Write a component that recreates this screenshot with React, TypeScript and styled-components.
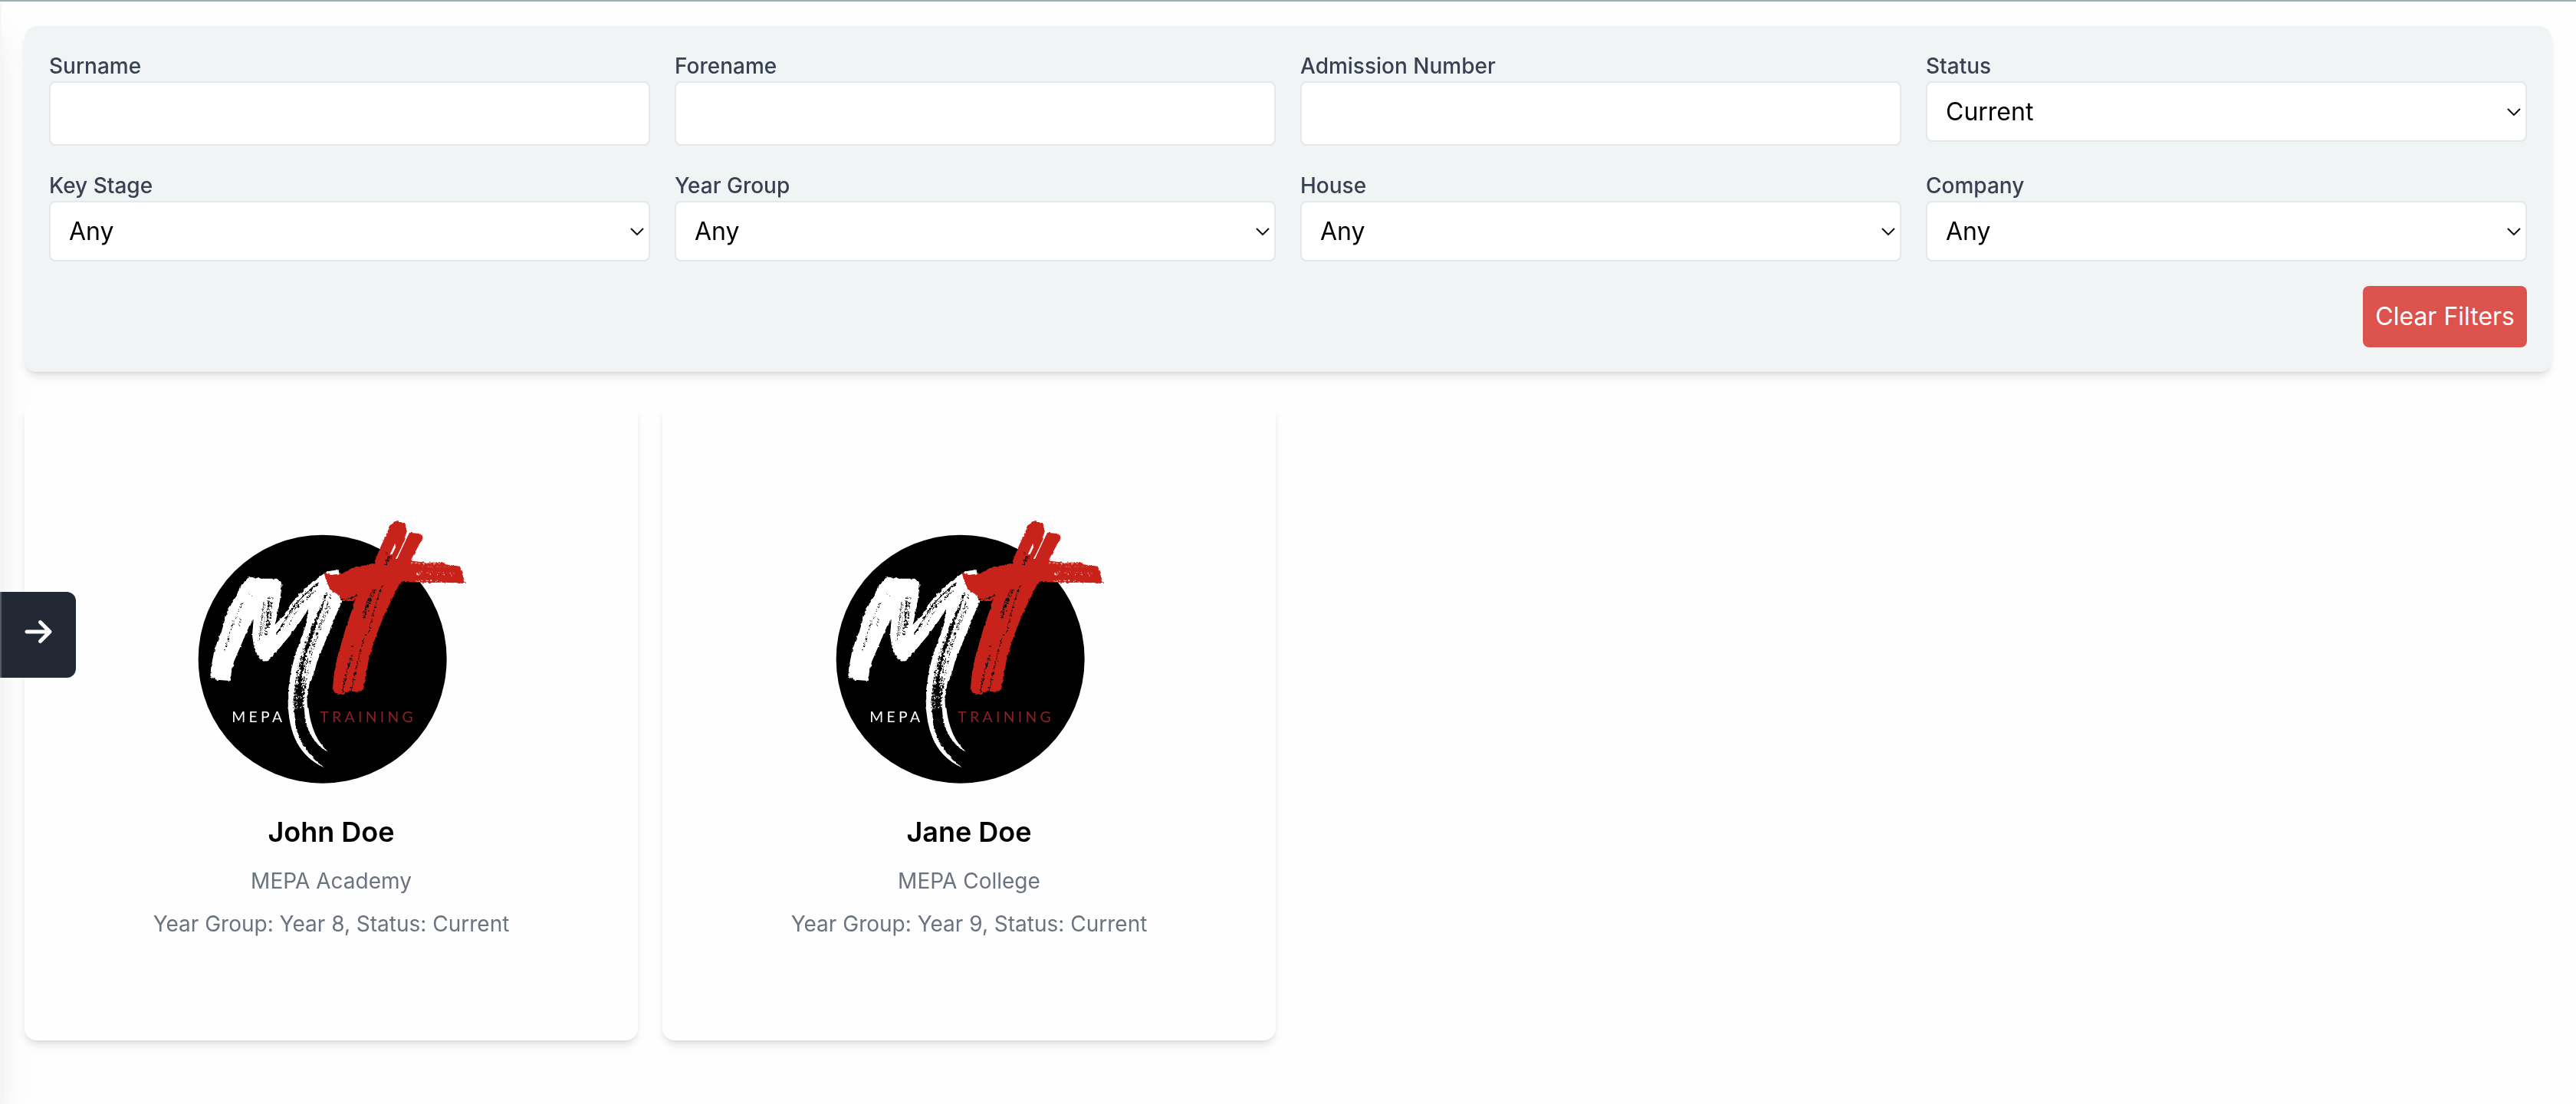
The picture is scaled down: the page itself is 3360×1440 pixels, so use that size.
import React, { useId, useState } from "react";
import styled, { createGlobalStyle } from "styled-components";
import { FaArrowRight } from "react-icons/fa6";

const GlobalStyle = createGlobalStyle`
  *, *::before, *::after { box-sizing: border-box; }
  body {
    margin: 0;
    background: #fefefe;
    color: #000;
    font-family: Inter, "Liberation Sans", sans-serif;
  }
`;

const Page = styled.div`
  min-height: 100vh;
  border-top: 2px solid #9cafb5;
`;

const Main = styled.main`
  position: relative;
  display: flex;
  flex-direction: column;
  gap: 40px;
  padding: 32px;
`;

const shadow = `
  box-shadow: 0 8px 12px -2px rgba(0, 0, 0, 0.1), 0 4px 8px -4px rgba(0, 0, 0, 0.1);
`;

const FilterPanel = styled.form`
  display: flex;
  flex-direction: column;
  gap: 32px;
  padding: 32px;
  border-radius: 16px;
  background: #f1f4f5;
  ${shadow}
`;

const FilterGrid = styled.div`
  display: grid;
  grid-template-columns: repeat(4, minmax(0, 1fr));
  align-items: start;
  gap: 32px;
`;

const Field = styled.div`
  display: flex;
  flex-direction: column;
`;

const Label = styled.label`
  color: #374151;
  font-size: 28px;
  font-weight: 500;
  line-height: 40px;
`;

const TextInput = styled.input`
  width: 100%;
  height: 84px;
  padding: 16px;
  border: 2px solid #e5e7eb;
  border-radius: 8px;
  background: #fff;
  font: inherit;
  font-size: 32px;
`;

const SelectBox = styled.div`
  display: grid;
  align-items: center;
  > * { grid-area: 1 / 1; }
`;

const Select = styled.select`
  width: 100%;
  height: 79px;
  padding: 0 48px 0 24px;
  appearance: none;
  border: 2px solid #e5e7eb;
  border-radius: 8px;
  background: #fff;
  color: #000;
  font: inherit;
  font-size: 32px;
`;

const Chevron = styled.svg`
  justify-self: end;
  width: 18px;
  height: 10px;
  margin-right: 8px;
  pointer-events: none;
`;

const Actions = styled.div`
  display: flex;
  justify-content: flex-end;
`;

const ClearButton = styled.button`
  padding: 16px;
  border: 0;
  border-radius: 8px;
  background: #dc524c;
  color: #fff;
  font: inherit;
  font-size: 32px;
  line-height: 48px;
`;

const CardGrid = styled.section`
  display: grid;
  grid-template-columns: repeat(4, minmax(0, 1fr));
  gap: 32px;
`;

const Card = styled.article`
  display: flex;
  flex-direction: column;
  align-items: center;
  gap: 16px;
  padding: 132px 32px;
  border-radius: 16px;
  background: #fefefe;
  ${shadow}
`;

const Name = styled.h2`
  margin: 0;
  font-size: 36px;
  font-weight: 600;
  line-height: 56px;
`;

const Detail = styled.p`
  margin: 0;
  color: #6b7280;
  font-size: 28px;
  line-height: 40px;
`;

const Drawer = styled.aside`
  position: fixed;
  top: 2px;
  bottom: 0;
  left: -510px;
  width: 512px;
  background: #f6f6f6;
  box-shadow: 0 40px 50px -10px rgba(0, 0, 0, 0.1), 0 16px 20px -12px rgba(0, 0, 0, 0.1);
`;

const DrawerToggle = styled.button`
  position: fixed;
  top: 772px;
  left: 0;
  display: flex;
  padding: 32px 29px 40px 28px;
  border: 0;
  border-left: 2px solid #545a64;
  border-radius: 0 12px 12px 0;
  background: #222834;
  color: #fff;
  font-size: 40px;
`;

const LogoArt = styled.svg`
  width: 384px;
  height: 384px;
`;

const Wordmark = styled.text`
  font-family: Lato, sans-serif;
  font-size: 58px;
  font-weight: 400;
  letter-spacing: 13px;
`;

const whiteStreaks = [
  { d: "M282 345 Q290 350 296 352", w: 3, dash: "5 6" },
  { d: "M258 378 L236 430 L208 500 L188 572", w: 3, dash: "9 7 3 11" },
  { d: "M222 448 L208 506 L196 545", w: 3, dash: "6 5 12 8" },
  { d: "M250 440 L246 470", w: 3, dash: "4 8" },
  { d: "M342 376 L336 430 L324 525", w: 3, dash: "13 4 6 3" },
  { d: "M348 378 L344 460 L330 510", w: 2, dash: "5 4" },
  { d: "M362 358 L360 410 L350 505", w: 7, dash: "8 5 26 4" },
  { d: "M374 358 L370 420 L360 480", w: 5, dash: "5 9 22 3" },
  { d: "M560 300 Q500 345 455 400 L392 500", w: 4, dash: "70 4 22 5" },
  { d: "M552 304 Q490 356 450 402", w: 7, dash: "42 4 16 6" },
  { d: "M545 332 Q490 375 440 428 L396 498", w: 4, dash: "16 5 30 9" },
  { d: "M470 412 L432 478", w: 3, dash: "5 8" },
];

const tailStreaks = [
  { d: "M588 340 L560 425 L525 510 L490 620 L474 720 L476 810", w: 6, dash: "22 6 40 4 9 5" },
  { d: "M603 352 L575 430 L540 525 L510 610 L496 700 L490 800 L510 890", w: 4, dash: "12 14 32 5 6 7" },
  { d: "M566 400 L535 470 L506 560 L488 650 L480 740", w: 7, dash: "34 4 18 5" },
  { d: "M548 455 L518 530 L496 610 L484 690", w: 8, dash: "60 4 30 6" },
  { d: "M600 395 L566 475 L535 560 L515 640 L500 720", w: 3, dash: "5 9 15 6" },
  { d: "M540 480 L505 580 L484 690 L478 800", w: 9, dash: "11 3 28 6" },
  { d: "M512 515 L484 600 L464 700 L458 790", w: 4, dash: "5 10 9 5" },
  { d: "M490 590 L472 660 L462 750 L468 850", w: 5, dash: "14 7 5 5" },
  { d: "M505 700 L494 760 L496 830 L520 900", w: 8, dash: "12 6 7 4" },
  { d: "M470 700 L466 800 L480 880 L520 955", w: 10, dash: "12 3 8 4" },
  { d: "M484 670 L484 800 L500 890", w: 16, dash: "18 4 35 2" },
];

const redStreaks = [
  { d: "M780 325 L752 385 L735 440", w: 8, dash: "5 5 13 6" },
  { d: "M770 325 L745 380 L732 430", w: 4, dash: "12 6" },
  { d: "M800 325 L775 400 L752 500", w: 4, dash: "13 8 5 7" },
  { d: "M808 310 L785 365 L762 460", w: 3, dash: "7 13" },
  { d: "M690 545 L685 610", w: 4, dash: "6 12" },
  { d: "M740 500 L722 560 L695 680 L682 725", w: 4, dash: "8 12 20 5" },
  { d: "M716 590 L698 650 L684 724", w: 3, dash: "10 6" },
  { d: "M682 595 L664 660 L650 736", w: 5, dash: "12 5 27 4" },
  { d: "M640 362 Q680 372 708 345", w: 3, dash: "24 5" },
  { d: "M668 366 Q690 360 706 350", w: 3, dash: "20 4" },
  { d: "M832 195 L820 232", w: 7, dash: "10 4" },
  { d: "M842 192 L832 215", w: 4, dash: "7 4" },
  { d: "M826 180 L822 196", w: 3, dash: "5 4" },
];

const whiteFlecks = [
  { d: "M940 268 L955 264", w: 5, dash: "9 4" },
  { d: "M964 238 L1072 236", w: 2, dash: "3 16 5 9" },
  { d: "M958 256 L1090 264", w: 2, dash: "3 21 6 12" },
  { d: "M990 268 L1085 270", w: 3, dash: "5 28 3 17" },
  { d: "M940 294 L1030 292", w: 3, dash: "10 9 5 12" },
  { d: "M918 222 L1048 226", w: 2, dash: "8 9 14 14" },
];

type Streak = { d: string; w: number; dash: string };

function Streaks({ items, color }: { items: Streak[]; color: string }) {
  return (
    <g fill="none" stroke={color}>
      {items.map((s) => (
        <path key={s.d} d={s.d} strokeWidth={s.w} strokeDasharray={s.dash} />
      ))}
    </g>
  );
}

function Logo() {
  const id = useId().replace(/[^a-zA-Z0-9]/g, "");
  return (
    <LogoArt viewBox="30 -9 1152 1152" role="img" aria-label="MEPA Training">
      <defs>
        <filter id={`rough${id}`} x="-5%" y="-5%" width="110%" height="110%" colorInterpolationFilters="sRGB">
          <feTurbulence type="fractalNoise" baseFrequency="0.07" numOctaves="2" seed="4" result="n" />
          <feDisplacementMap in="SourceGraphic" in2="n" scale="10" xChannelSelector="R" yChannelSelector="G" />
        </filter>
        <filter id={`dry${id}`} x="-20%" y="-10%" width="140%" height="120%" colorInterpolationFilters="sRGB">
          <feTurbulence type="fractalNoise" baseFrequency="0.12" numOctaves="2" seed="9" result="n" />
          <feDisplacementMap in="SourceGraphic" in2="n" scale="16" xChannelSelector="R" yChannelSelector="G" />
        </filter>
      </defs>
      <circle cx="572" cy="599" r="486" fill="#000" />
      <path
        filter={`url(#rough${id})`}
        fill="#fff"
        d="M280 282 L295 276 L315 282 L322 280 L330 284 L388 284 Q412 292 413 312 L405 372 L396 420 L386 464
           L420 428 L450 382 L490 336 L530 300 L575 266 L592 256 L635 249 L637 262 L650 300 L648 376
           L630 415 L600 490 L570 560 L550 612 L540 650 L520 700 L511 750 L515 820 L525 865 L550 912
           L592 962 L565 945 L530 905 L510 870 L498 900 L478 892 Q505 965 578 1023
           Q505 985 472 920 L450 850 L440 800 L438 720 L448 650 L465 580 L488 520 L505 470 L517 402
           L490 445 L450 500 L400 560 L362 602 Q342 616 325 596 Q308 575 303 548 L297 505 L302 445
           L285 470 L255 540 L225 610 L209 684 L160 680 L133 668 L136 630 L150 560 L180 480 L200 410
           L230 360 L255 308 Z"
      />
      <g filter={`url(#dry${id})`}>
        <Streaks items={whiteStreaks} color="#000" />
        <Streaks items={tailStreaks} color="#000" />
        <path d="M462 795 L504 790 L506 850 Q522 905 580 958 L574 1012 Q520 975 488 920 L466 860 Z" fill="#000" />
      </g>
      <path d="M437 760 Q437 960 577 1023 Q468 950 452 800 L450 740 Z" fill="#fff" />
      <path d="M500 790 Q506 915 593 962 Q530 905 517 790 Z" fill="#fff" />
      <g filter={`url(#rough${id})`} fill="#c8231a">
        <path
          d="M865 56 L893 70 L903 96 L894 124 L898 128 L912 104 L950 108 Q966 116 964 127 L940 170 L914 218
             L890 275 L870 312 L840 372 L810 435 L780 512 L755 590 L740 668 L732 718 L706 728 L680 724
             L650 738 L622 732 L611 718 L616 668 L626 608 L645 540 L665 470 L690 400 L708 342 L775 220
             L800 158 L838 74 Z"
        />
        <path
          d="M577 258 L605 270 L650 264 L685 244 L770 224 L915 214 L980 222 L1040 219 L1050 228 L1110 236
             L1131 303 L1050 299 L980 300 L875 296 L720 350 L690 372 L648 372 L630 345 L602 326 L586 292 Z"
        />
      </g>
      <path d="M914 95 L862 206" stroke="#fff" strokeWidth="4" />
      <path d="M906 98 L892 128 L900 118 Z M856 146 L836 190 L844 190 L858 162 Z M872 182 L857 208 L864 204 Z" fill="#fff" />
      <g filter={`url(#dry${id})`}>
        <Streaks items={redStreaks} color="#150302" />
        <Streaks items={whiteFlecks} color="#fff" />
      </g>
      <Wordmark x="217" y="845" fill="#fff">MEPA</Wordmark>
      <Wordmark x="562" y="845" fill="#8e2024">TRAINING</Wordmark>
    </LogoArt>
  );
}

type FilterDef = { id: string; label: string; options?: string[] };

const filters: FilterDef[] = [
  { id: "surname", label: "Surname" },
  { id: "forename", label: "Forename" },
  { id: "admission", label: "Admission Number" },
  { id: "status", label: "Status", options: ["Current"] },
  { id: "keyStage", label: "Key Stage", options: ["Any"] },
  { id: "yearGroup", label: "Year Group", options: ["Any"] },
  { id: "house", label: "House", options: ["Any"] },
  { id: "company", label: "Company", options: ["Any"] },
];

const students = [
  { name: "John Doe", school: "MEPA Academy", year: "Year 8", status: "Current" },
  { name: "Jane Doe", school: "MEPA College", year: "Year 9", status: "Current" },
];

function FilterField({ id, label, options }: FilterDef) {
  return (
    <Field>
      <Label htmlFor={id}>{label}</Label>
      {options ? (
        <SelectBox>
          <Select id={id}>
            {options.map((o) => (
              <option key={o}>{o}</option>
            ))}
          </Select>
          <Chevron viewBox="0 0 18 10" aria-hidden="true">
            <path d="M1 1 L9 9 L17 1" fill="none" stroke="#111" strokeWidth="2" />
          </Chevron>
        </SelectBox>
      ) : (
        <TextInput id={id} type="text" />
      )}
    </Field>
  );
}

export default function App() {
  const [open, setOpen] = useState(false);
  return (
    <Page>
      <GlobalStyle />
      <Drawer />
      <Main>
        <FilterPanel>
          <FilterGrid>
            {filters.map((f) => (
              <FilterField key={f.id} {...f} />
            ))}
          </FilterGrid>
          <Actions>
            <ClearButton type="reset">Clear Filters</ClearButton>
          </Actions>
        </FilterPanel>
        <CardGrid>
          {students.map((s) => (
            <Card key={s.name}>
              <Logo />
              <Name>{s.name}</Name>
              <Detail>{s.school}</Detail>
              <Detail>{`Year Group: ${s.year}, Status: ${s.status}`}</Detail>
            </Card>
          ))}
        </CardGrid>
      </Main>
      <DrawerToggle type="button" aria-label="Open menu" aria-expanded={open} onClick={() => setOpen(!open)}>
        <FaArrowRight />
      </DrawerToggle>
    </Page>
  );
}
